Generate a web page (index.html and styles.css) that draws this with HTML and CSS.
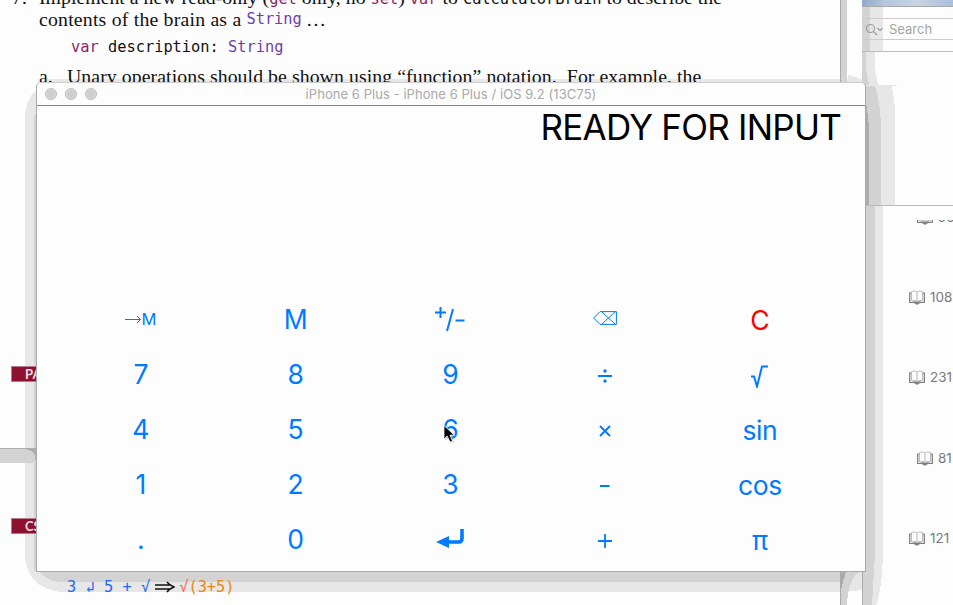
FILE: index.html
```html
<!DOCTYPE html>
<html lang="en">
<head>
<meta charset="utf-8">
<title>Calculator simulator</title>
<link rel="stylesheet" href="styles.css">
</head>
<body>
<main class="desktop">
  <svg class="shade" width="953" height="605" shape-rendering="crispEdges">
    <path fill="#e7e7e7" d="M46 79H862V83H46zM36 90Q25 100 25 120V556Q27 587 60 592H840Q875 592 880 572L883 553V206H865V571H36z"/>
    <path fill="#d3d3d3" d="M34 115H36V571H34zM39 571Q45 580 59 582H840V571zM865 206H875V568L872 605H862V571H865z"/>
    <path fill="#e7e7e7" d="M875 553H883Q882 590 876 605H872zM848 75Q860 76 862 83H848z"/>
    <path fill="#d3d3d3" d="M840 0H847V83H840zM840 571H862Q848 576 847 605H840z"/>
    <path fill="#aaa" d="M840 0H841V83H840zM862 0H863V83H862zM840 571H846L841 590V605H840zM862 571H863V605H862z"/>
    <path fill="#d3d3d3" d="M862 51H866V64L869 85H862z"/>
    <path fill="#e7e7e7" d="M866 51H875V68L878 85H869L866 68z"/>
    <path fill="#e7e7e7" d="M865 85H897V86H892L895 108V205H865z"/>
    <path fill="#d3d3d3" d="M865 86H875Q881 105 881 130V205H865z"/>
    <path fill="#adadad" d="M865 99Q869 115 869 135V205H865z"/>
    <path fill="#d3d3d3" d="M0 448H36V463H0z"/>
    <path fill="#adadad" d="M0 448H36V463L35 457Q35 449 20 449H0z"/>
    <path fill="#bbb" d="M865 205H953V206H865z"/>
  </svg>

  <section class="document">
    <p class="prose top"><span class="num">7.</span><span class="top-text">Implement a new read-only (<code class="kw">get</code> only, no <code class="kw">set</code>) <code class="kw">var</code> to <code>CalculatorBrain</code> to describe the</span></p>
    <p class="prose second"><span class="second-text">contents of the brain as a</span> <code class="type">String</code> <span class="dots">...</span></p>
    <p class="code"><span class="kw">var</span> description: <span class="type">String</span></p>
    <p class="prose item"><span class="letter">a.</span><span class="item-text">Unary operations should be shown using “function” notation.&nbsp; For example, the</span></p>
  </section>
  <div class="tag tag-pa">PA</div>
  <div class="tag tag-cs">CS</div>
  <p class="example"><span>3 ↲ 5 + √</span><svg width="21" height="12" fill="none" stroke="#111" stroke-width="1.4"><path d="M1 4H17M1 8H17M13 1Q15 4 20 6Q15 8 13 11"/></svg><span class="root">√</span><span class="expr">(3+5)</span></p>

  <aside class="browser">
    <div class="photo"></div>
    <div class="search">
      <svg width="20" height="14" fill="none" stroke="#999" stroke-width="1.1"><circle cx="5.5" cy="5.5" r="4"/><path d="M8.5 8.5L12 12M12.5 5L15 7.5L17.5 5"/></svg>
      <span>Search</span>
    </div>
    <div class="stat cut"><svg class="book" viewBox="0 0 16 15"><use href="#book"/></svg><span>90</span></div>
    <div class="stat s1"><svg class="book" viewBox="0 0 16 15"><use href="#book"/></svg><span>108</span></div>
    <div class="stat s2"><svg class="book" viewBox="0 0 16 15"><use href="#book"/></svg><span>231</span></div>
    <div class="stat s3"><svg class="book" viewBox="0 0 16 15"><use href="#book"/></svg><span>81</span></div>
    <div class="stat s4"><svg class="book" viewBox="0 0 16 15"><use href="#book"/></svg><span>121</span></div>
    <svg width="0" height="0" class="defs"><defs><g id="book"><path d="M2.5 1.5Q6 0 8 2Q10 0 13.5 1.5V11Q10 9.5 8 11.5Q6 9.5 2.5 11z" fill="#fdfdfd" stroke="#bbb"/><path d="M8 2V11" stroke="#ccc" stroke-width="1.5"/><path d="M2 3H.7V12.5H5.5Q7 12.5 8 14Q9 12.5 10.5 12.5H15.3V3H14" fill="none" stroke="#777" stroke-width="1.2"/><path d="M2 12.5Q6 10.5 8 12Q10 10.5 14 12.5L10 13.5L8 14.8L6 13.5z" fill="#808080"/></g></defs></svg>
  </aside>

  <section class="simulator">
    <header class="titlebar">
      <div class="lights"><i class="light"></i><i class="light"></i><i class="light"></i></div>
      <h1>iPhone 6 Plus - iPhone 6 Plus / iOS 9.2 (13C75)</h1>
    </header>
    <div class="display"><span>READY FOR INPUT</span></div>
    <div class="keys">
      <button class="small"><svg width="16" height="10" fill="none" stroke="#007aff"><path d="M0 5.5H15.5M12 2L15.5 5.5L12 9"/></svg>M</button>
      <button>M</button>
      <button><svg width="30" height="28" fill="none" stroke="#007aff" stroke-width="2"><path d="M0 7.5H11M5.5 2V13M12 26L18 4M20.5 15.5H29.5"/></svg></button>
      <button><svg class="rise" width="24" height="14" fill="none" stroke="#007aff"><path d="M.7 7L7 .6H23.4V13.4H7zM9 1L22 13M22 1L9 13"/></svg></button>
      <button class="clear">C</button>
      <button>7</button><button>8</button><button>9</button>
      <button><svg class="drop" width="14" height="14" fill="#007aff"><path d="M0 6H14V8H0z"/><circle cx="7" cy="2" r="1.7"/><circle cx="7" cy="12" r="1.7"/></svg></button>
      <button><svg class="drop2" width="17" height="23" fill="none" stroke="#007aff" stroke-width="2"><path d="M0 11.5H3L6 21.5L11 1.5H17"/></svg></button>
      <button>4</button><button>5</button><button>6</button>
      <button><svg class="drop" width="12" height="12" fill="none" stroke="#007aff" stroke-width="1.9"><path d="M1 1L11 11M11 1L1 11"/></svg></button>
      <button class="word">sin</button>
      <button>1</button><button>2</button><button>3</button>
      <button><svg class="drop" width="10" height="2"><path fill="#007aff" d="M0 0H9.5V2H0z"/></svg></button>
      <button class="word">cos</button>
      <button>.</button><button>0</button>
      <button><svg width="30" height="22" fill="#007aff"><path d="M1 14L14 8V20z"/><path d="M12 14H24Q27 14 27 10V1" fill="none" stroke="#007aff" stroke-width="3.6"/></svg></button>
      <button><svg class="drop" width="14" height="14"><path fill="none" stroke="#007aff" stroke-width="1.8" d="M0 7H14M7 0V14"/></svg></button>
      <button class="word">π</button>
    </div>
  </section>
  <svg class="cursor" width="14" height="20"><path d="M2 1V15L5 12L8 18L11 17L8.5 11H13z" fill="#aaa" opacity=".6"/><path d="M1 .5V14L4.2 11L7 17L9.5 16L7 10.2H11.5z" fill="#000" stroke="#fff" stroke-width=".8"/></svg>
</main>
</body>
</html>
```
FILE: styles.css
```css
* { box-sizing: border-box; }
body { margin: 0; background: #fdfdfd; }
p, h1 { margin: 0; font-weight: normal; }
.desktop { position: relative; width: 953px; height: 605px; overflow: hidden; font-family: Inter, sans-serif; }
.shade { position: absolute; left: 0; top: 0; }

.document { position: absolute; left: 0; top: -13px; width: 840px; height: 96px; overflow: hidden; color: #111; }
.prose { display: flex; font: 19.8px/24px "Liberation Serif", serif; white-space: pre; }
.prose code { font: 15.35px/20px "DejaVu Sans Mono", monospace; letter-spacing: 0; }
.kw { color: #8f1f63; }
.type { color: #6e3eac; }
.top { height: 17px; line-height: 20px; }
.num { width: 27px; margin-left: 12px; }
.top-text { letter-spacing: .02px; }
.second { margin-left: 39px; height: 29px; align-items: center; line-height: 24px; }
.second-text { letter-spacing: .2px; }
.second code { margin-left: 5px; }
.dots { margin-left: 5px; letter-spacing: 1.7px; }
.code { margin-left: 71px; height: 28px; font: 15.35px/28px "DejaVu Sans Mono", monospace; white-space: pre; }
.item { margin-left: 39px; line-height: 31px; }
.letter { width: 28px; }
.item-text { letter-spacing: .07px; }

.tag { position: absolute; left: 11px; width: 26px; height: 16px; padding-left: 13px; overflow: hidden; background: #8e1230; border: 1px solid #b67b87; border-right: 0; color: #f3dde2; font: bold 13px/14px Lato, sans-serif; }
.tag-pa { top: 366px; }
.tag-cs { top: 518px; }
.example { position: absolute; left: 67px; top: 577px; display: flex; align-items: center; font: 15.35px/20px "DejaVu Sans Mono", monospace; white-space: pre; color: #2268ee; }
.example svg { margin: 0 4px 0 4px; }
.root { color: #f26458; }
.expr { color: #e48714; }

.browser { position: absolute; left: 862px; top: 0; width: 91px; height: 605px; color: #7b7b7b; }
.photo { height: 7px; background: linear-gradient(90deg, #8fa9ca, #b4c7db 25%, #c7d5e4 60%, #a9c0dc); border-bottom: 1px solid #aaa; }
.search { display: flex; align-items: center; height: 45px; border-bottom: 1px solid #bbb; font-size: 13px; color: #a4a4a4; background: linear-gradient(#ccc, #ccc) 0 11px / 100% 1px no-repeat, linear-gradient(#ccc, #ccc) 0 32px / 100% 1px no-repeat, linear-gradient(90deg, #d3d3d3 8px, #e7e7e7 8px 21px, #fdfdfd 21px); }
.search svg { margin: 2px 4px 0 3px; }
.stat { position: absolute; left: 47px; display: flex; gap: 5px; height: 16px; align-items: center; font-size: 13.5px; line-height: 16px; }
.book { width: 16px; height: 15px; flex: none; }
.s1 { top: 289px; }
.s2 { top: 369px; }
.s3 { top: 450px; left: 55px; }
.s4 { top: 530px; }
.cut { top: 209px; left: 55px; clip-path: inset(11px 0 0 0); }
.defs { position: absolute; }

.simulator { position: absolute; left: 36px; top: 82px; width: 830px; height: 490px; border: 1px solid #aaa; border-top-color: #ccc; border-radius: 5px 5px 0 0; background: #fdfdfd; }
.titlebar { display: grid; grid-template-columns: 80px 1fr 80px; align-items: center; height: 23px; border-bottom: 1px solid #858585; }
.lights { display: flex; gap: 8px; padding-left: 8px; }
.light { width: 12px; height: 12px; border: 1px solid #bdbdbd; border-radius: 50%; background: #cecece; box-shadow: inset 0 0 0 1px #dedede; }
.titlebar h1 { text-align: center; font-size: 13px; line-height: 22px; letter-spacing: .06px; color: #a9a9a9; }
.display { height: 185px; padding: 0 24px 0 0; text-align: right; font-size: 35px; line-height: 43px; letter-spacing: -.76px; color: #000; }
.keys { display: grid; grid-template-columns: repeat(5, 154.75px); grid-auto-rows: 55px; padding-left: 26.5px; }
.keys button { display: flex; align-items: center; justify-content: center; padding: 1px 0 0; border: 0; background: none; color: #007aff; font: 26.5px/54px Inter, sans-serif; }
.keys .small { font-size: 16.5px; }
.keys .clear { color: #f00; padding-top: 2px; }
.keys .word { padding-top: 2px; letter-spacing: -.5px; }
.rise { margin-top: -2px; }
.drop { margin-top: 3px; }
.drop2 { margin-top: 5px; }
.cursor { position: absolute; left: 443px; top: 425px; }
```
